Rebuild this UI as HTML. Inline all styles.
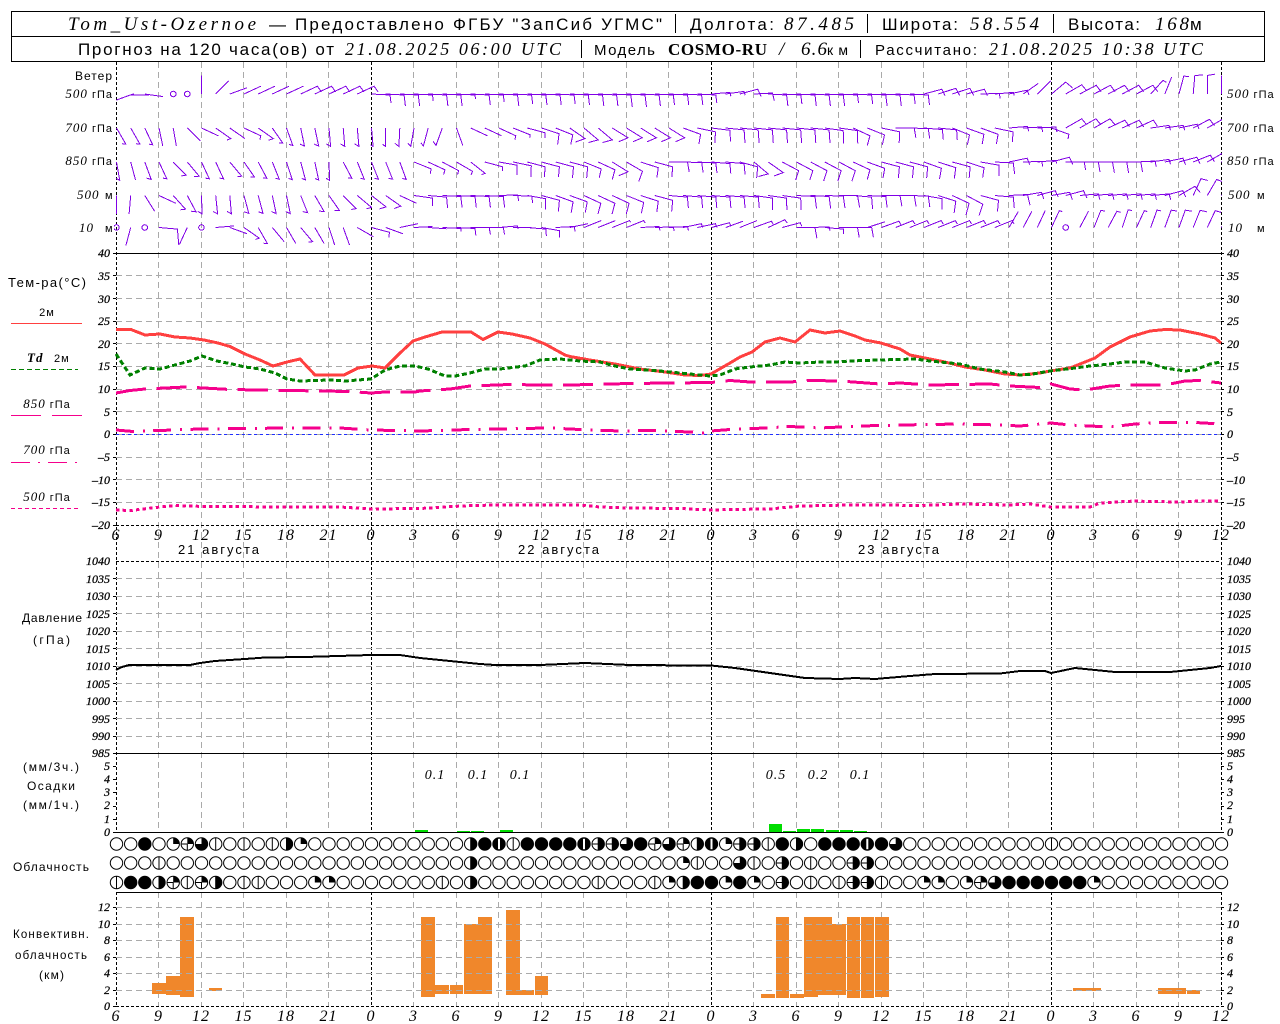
<!DOCTYPE html>
<html lang="ru">
<head>
<meta charset="utf-8">
<title>Tom_Ust-Ozernoe</title>
<style>
html,body{margin:0;padding:0;background:#fff;}
svg{position:absolute;left:0;top:0;display:block;}
text{fill:#000;}
.s{font-family:"Liberation Sans","DejaVu Sans",sans-serif;font-size:12px;letter-spacing:1px;}
.h{font-family:"Liberation Sans","DejaVu Sans",sans-serif;font-size:17px;}
.hi{font-family:"Liberation Serif","DejaVu Serif",serif;font-style:italic;font-size:19px;}
.hb{font-family:"Liberation Serif","DejaVu Serif",serif;font-weight:bold;font-size:17px;}
.n{font-family:"Liberation Serif","DejaVu Serif",serif;font-style:italic;font-size:12px;stroke:#000;stroke-width:.25px;}
.x{font-family:"Liberation Serif","DejaVu Serif",serif;font-style:italic;font-size:16px;text-anchor:middle;letter-spacing:1px;}
.v{font-family:"Liberation Serif","DejaVu Serif",serif;font-style:italic;font-size:14px;text-anchor:middle;letter-spacing:1px;}
.c{text-anchor:middle;}
.e{text-anchor:end;}
.it{font-family:"Liberation Serif","DejaVu Serif",serif;font-style:italic;font-size:13px;}
</style>
</head>
<body>
<svg xmlns="http://www.w3.org/2000/svg" width="1280" height="1024" viewBox="0 0 1280 1024">
<rect width="1280" height="1024" fill="#fff"/>
<g id="gfx"></g>

<!-- header -->
<rect x="11.5" y="11.5" width="1253" height="50" fill="none" stroke="#000"/>
<line x1="11" y1="36.5" x2="1265" y2="36.5" stroke="#000"/>
<g stroke="#000" shape-rendering="crispEdges">
<line x1="675.5" y1="14" x2="675.5" y2="33"/><line x1="867.5" y1="14" x2="867.5" y2="33"/><line x1="1053.5" y1="14" x2="1053.5" y2="33"/>
<line x1="860.5" y1="40" x2="860.5" y2="58"/><line x1="581.5" y1="40" x2="581.5" y2="58"/>
</g>
<text class="hi" x="68" y="30" textLength="188">Tom_Ust-Ozernoe</text>
<text class="h" x="269" y="30" textLength="12">—</text>
<text class="h" x="295" y="30" textLength="367">Предоставлено ФГБУ "ЗапСиб УГМС"</text>
<text class="h" x="690" y="30" textLength="84">Долгота:</text>
<text class="hi" x="784" y="30" textLength="70">87.485</text>
<text class="h" x="882" y="30" textLength="76">Широта:</text>
<text class="hi" x="970" y="30" textLength="69">58.554</text>
<text class="h" x="1068" y="30" textLength="72">Высота:</text>
<text class="hi" x="1155" y="30" textLength="34">168</text>
<text class="h" x="1190" y="30" textLength="12">м</text>

<text class="h" x="78" y="55" textLength="256">Прогноз на 120 часа(ов) от</text>
<text class="hi" x="345" y="55" textLength="216" style="font-size:18px">21.08.2025 06:00 UTC</text>
<text class="h" x="594" y="55" textLength="61" style="font-size:15px">Модель</text>
<text class="hb" x="668" y="55" textLength="99">COSMO-RU</text>
<text class="hi" x="779" y="55" textLength="11">/</text>
<text class="hi" x="801" y="55" textLength="26">6.6</text>
<text class="h" x="827" y="55" textLength="21" style="font-size:14px">км</text>
<text class="h" x="875" y="55" textLength="102" style="font-size:15px">Рассчитано:</text>
<text class="hi" x="989" y="55" textLength="214" style="font-size:18px">21.08.2025 10:38 UTC</text>

<!-- wind labels -->
<text class="s e" x="113" y="80">Ветер</text>
<g class="s" style="font-size:11px">
<text class="e" x="113" y="98"><tspan class="it">500</tspan> гПа</text>
<text class="e" x="113" y="132"><tspan class="it">700</tspan> гПа</text>
<text class="e" x="113" y="165"><tspan class="it">850</tspan> гПа</text>
<text x="77" y="199"><tspan class="it">500</tspan></text><text x="105" y="199">м</text>
<text x="79" y="232"><tspan class="it">10</tspan></text><text x="105" y="232">м</text>
<text x="1227" y="98"><tspan class="it">500</tspan> гПа</text>
<text x="1227" y="132"><tspan class="it">700</tspan> гПа</text>
<text x="1227" y="165"><tspan class="it">850</tspan> гПа</text>
<text x="1228" y="199"><tspan class="it">500</tspan></text><text x="1257" y="199">м</text>
<text x="1228" y="232"><tspan class="it">10</tspan></text><text x="1257" y="232">м</text>
</g>

<!-- temp legend -->
<text class="s" x="8" y="287" textLength="79" style="font-size:13px">Тем-ра(°С)</text>
<text class="s c" x="47" y="316" style="font-size:11px">2м</text>
<text class="s" x="27" y="362" style="font-size:11px"><tspan class="it" font-weight="bold">Td</tspan></text>
<text class="s" x="54" y="362" style="font-size:11px">2м</text>
<text class="s c" x="47" y="408" style="font-size:11px"><tspan class="it">850</tspan> гПа</text>
<text class="s c" x="47" y="454" style="font-size:11px"><tspan class="it">700</tspan> гПа</text>
<text class="s c" x="47" y="501" style="font-size:11px"><tspan class="it">500</tspan> гПа</text>

<!-- side labels -->
<text class="s" x="22" y="622" textLength="61">Давление</text>
<text class="s" x="33" y="644" textLength="38">(гПа)</text>
<text class="s" x="23" y="771" textLength="57">(мм/3ч.)</text>
<text class="s" x="27" y="790" textLength="49">Осадки</text>
<text class="s" x="23" y="809" textLength="57">(мм/1ч.)</text>
<text class="s" x="13" y="871" textLength="77">Облачность</text>
<text class="s" x="13" y="938" textLength="77" style="font-size:11.5px">Конвективн.</text>
<text class="s" x="15" y="959" textLength="73" style="font-size:11.5px">облачность</text>
<text class="s" x="39" y="979" textLength="26">(км)</text>

<!-- temp axes -->
<g class="n e">
<text x="110" y="257">40</text><text x="110" y="280">35</text><text x="110" y="303">30</text><text x="110" y="325">25</text><text x="110" y="348">20</text><text x="110" y="370">15</text><text x="110" y="393">10</text><text x="110" y="416">5</text><text x="110" y="438">0</text><text x="110" y="461">–5</text><text x="110" y="484">–10</text><text x="110" y="506">–15</text><text x="110" y="529">–20</text>
<text x="110" y="565">1040</text><text x="110" y="583">1035</text><text x="110" y="600">1030</text><text x="110" y="618">1025</text><text x="110" y="635">1020</text><text x="110" y="653">1015</text><text x="110" y="670">1010</text><text x="110" y="688">1005</text><text x="110" y="705">1000</text><text x="110" y="723">995</text><text x="110" y="740">990</text><text x="110" y="757">985</text>
<text x="110" y="770">5</text><text x="110" y="783">4</text><text x="110" y="796">3</text><text x="110" y="809">2</text><text x="110" y="823">1</text><text x="110" y="836">0</text>
<text x="110" y="911">12</text><text x="110" y="928">10</text><text x="110" y="944">8</text><text x="110" y="961">6</text><text x="110" y="977">4</text><text x="110" y="994">2</text><text x="110" y="1010">0</text>
</g>
<g class="n">
<text x="1227" y="257">40</text><text x="1227" y="280">35</text><text x="1227" y="303">30</text><text x="1227" y="325">25</text><text x="1227" y="348">20</text><text x="1227" y="370">15</text><text x="1227" y="393">10</text><text x="1227" y="416">5</text><text x="1227" y="438">0</text><text x="1227" y="461">–5</text><text x="1227" y="484">–10</text><text x="1227" y="506">–15</text><text x="1227" y="529">–20</text>
<text x="1227" y="565">1040</text><text x="1227" y="583">1035</text><text x="1227" y="600">1030</text><text x="1227" y="618">1025</text><text x="1227" y="635">1020</text><text x="1227" y="653">1015</text><text x="1227" y="670">1010</text><text x="1227" y="688">1005</text><text x="1227" y="705">1000</text><text x="1227" y="723">995</text><text x="1227" y="740">990</text><text x="1227" y="757">985</text>
<text x="1227" y="770">5</text><text x="1227" y="783">4</text><text x="1227" y="796">3</text><text x="1227" y="809">2</text><text x="1227" y="823">1</text><text x="1227" y="836">0</text>
<text x="1227" y="911">12</text><text x="1227" y="928">10</text><text x="1227" y="944">8</text><text x="1227" y="961">6</text><text x="1227" y="977">4</text><text x="1227" y="994">2</text><text x="1227" y="1010">0</text>
</g>

<!-- x labels temperature -->
<g class="x">
<text x="116" y="540">6</text><text x="158.5" y="540">9</text><text x="201" y="540">12</text><text x="243.5" y="540">15</text><text x="286" y="540">18</text><text x="328.5" y="540">21</text><text x="371" y="540">0</text><text x="413.5" y="540">3</text><text x="456" y="540">6</text><text x="498.5" y="540">9</text><text x="541" y="540">12</text><text x="583.5" y="540">15</text><text x="626" y="540">18</text><text x="668.5" y="540">21</text><text x="711" y="540">0</text><text x="753.5" y="540">3</text><text x="796" y="540">6</text><text x="838.5" y="540">9</text><text x="881" y="540">12</text><text x="923.5" y="540">15</text><text x="966" y="540">18</text><text x="1008.5" y="540">21</text><text x="1051" y="540">0</text><text x="1093.5" y="540">3</text><text x="1136" y="540">6</text><text x="1178.5" y="540">9</text><text x="1221" y="540">12</text>
</g>
<text class="s" x="178" y="554" textLength="82" style="font-size:13px">21 августа</text>
<text class="s" x="518" y="554" textLength="82" style="font-size:13px">22 августа</text>
<text class="s" x="858" y="554" textLength="82" style="font-size:13px">23 августа</text>

<!-- precipitation values -->
<g class="v">
<text x="435" y="779">0.1</text><text x="478" y="779">0.1</text><text x="520" y="779">0.1</text>
<text x="776" y="779">0.5</text><text x="818" y="779">0.2</text><text x="860" y="779">0.1</text>
</g>

<!-- x labels bottom -->
<g class="x">
<text x="116" y="1021">6</text><text x="158.5" y="1021">9</text><text x="201" y="1021">12</text><text x="243.5" y="1021">15</text><text x="286" y="1021">18</text><text x="328.5" y="1021">21</text><text x="371" y="1021">0</text><text x="413.5" y="1021">3</text><text x="456" y="1021">6</text><text x="498.5" y="1021">9</text><text x="541" y="1021">12</text><text x="583.5" y="1021">15</text><text x="626" y="1021">18</text><text x="668.5" y="1021">21</text><text x="711" y="1021">0</text><text x="753.5" y="1021">3</text><text x="796" y="1021">6</text><text x="838.5" y="1021">9</text><text x="881" y="1021">12</text><text x="923.5" y="1021">15</text><text x="966" y="1021">18</text><text x="1008.5" y="1021">21</text><text x="1051" y="1021">0</text><text x="1093.5" y="1021">3</text><text x="1136" y="1021">6</text><text x="1178.5" y="1021">9</text><text x="1221" y="1021">12</text>
</g>
</svg>
<script>
(function(){
var o=[];
var GREY='#aaaaaa',PINK='#f5008c',PUR='#8000e6';
function L(x1,y1,x2,y2,c,d,w){o.push('<line x1="'+x1+'" y1="'+y1+'" x2="'+x2+'" y2="'+y2+'" stroke="'+c+'" stroke-width="'+(w||1)+'"'+(d?' stroke-dasharray="'+d+'"':'')+'/>');}
function R(x0,x1,y0,y1,c){o.push('<rect x="'+x0+'" y="'+y0+'" width="'+(x1-x0)+'" height="'+(y1-y0)+'" fill="'+c+'"/>');}
function P(pts,c,w,d){var s=pts.map(function(p){return p[0]+','+p[1]}).join(' ');o.push('<polyline fill="none" points="'+s+'" stroke="'+c+'" stroke-width="'+w+'"'+(d?' stroke-dasharray="'+d+'"':'')+'/>');}
o.push('<g shape-rendering="crispEdges">');

/* vertical grid */
for(var k=0;k<27;k++){
  var x=Math.floor(116+42.5*k)+0.5;
  var black=(k==0||k==26||k==6||k==14||k==22);
  var c=black?'#000':GREY, d=black?'3,2':'6,4';
  L(x,62,x,832,c,d);
  L(x,892,x,1006,c,d);
}

/* horizontal grid: temperature */
for(var v=35;v>=-15;v-=5){var y=Math.round(434-v*4.533)+0.5;L(116,y,1221,y,GREY,'6,4');L(113,y,116,y,'#000');L(1221,y,1224,y,'#000');}
L(116,525.5,1221,525.5,'#000','3,2');L(113,525.5,116,525.5,'#000');L(1221,525.5,1224,525.5,'#000');
L(116,434.5,1221,434.5,'#2030ff','3,3');

/* horizontal grid: pressure */
for(var p=1035;p>=990;p-=5){var yy=Math.round(561+(1040-p)*3.49)+0.5;L(116,yy,1221,yy,GREY,'6,4');L(113,yy,116,yy,'#000');L(1221,yy,1224,yy,'#000');}
L(116,561.5,1221,561.5,'#000','3,2');

/* precip ticks */
for(var q=1;q<=5;q++){var yq=Math.round(832-q*13.2)+0.5;L(113,yq,116,yq,'#000');L(1221,yq,1224,yq,'#000');}

/* panel lines */
L(113,253.5,1224,253.5,'#000');
L(113,753.5,1224,753.5,'#000');
L(113,832.5,1224,832.5,'#000');
L(116,892.5,1222,892.5,'#000');

/* precip bars */
[[415,428,830],[457,470,831],[471,484,831],[500,513,830],[769,782,824],[783,796,831],[797,810,829],[811,824,829],[826,839,830],[840,853,830],[854,867,831]].forEach(function(b){R(b[0],b[1],b[2],832,'#00dd00');});

/* conv bars */
[[152,166,983,994],[166,180,976,995],[180,194,917,997],[209,222,988,991],
[421,435,917,997],[435,449,985,994],[450,463,985,994],[464,478,924,994],[478,492,917,994],
[506,520,910,995],[520,534,990,995],[535,548,976,995],
[761,775,994,998],[776,789,917,998],[790,804,994,998],[804,818,917,997],[818,832,917,995],[832,846,924,995],[847,860,917,998],[861,874,917,998],[875,889,917,997],
[1073,1101,988,991],[1158,1186,988,994],[1187,1200,990,994]].forEach(function(b){R(b[0],b[1],b[2],b[3],'#f0872b');});

/* conv horiz grid */
for(var g=2;g<=12;g+=2){var yg=Math.round(1006.3-g*8.25)+0.5;L(116,yg,1221,yg,GREY,'6,4');L(113,yg,116,yg,'#000');L(1221,yg,1224,yg,'#000');}
L(116,1006.5,1221,1006.5,'#000','3,2');L(113,1006.5,116,1006.5,'#000');L(1221,1006.5,1224,1006.5,'#000');

/* legend lines */
L(11,323.5,82,323.5,'#ff4040');
L(11,369.5,78,369.5,'#008000','5,3');
L(11,415.5,41,415.5,PINK);L(52,415.5,82,415.5,PINK);
L(11,462.5,30,462.5,PINK);L(38,462.5,40,462.5,PINK);L(48,462.5,67,462.5,PINK);L(75,462.5,77,462.5,PINK);
L(11,508.5,78,508.5,PINK,'4,3');

/* curves */
var T2=[[116,329.5],[131,329.5],[145,335],[160,334],[175,337],[190,338],[204,340],[218,343],[230,346.5],[245,354],[260,360],[273,366],[287,362],[300,359],[315,375],[344,375],[358,368],[372,366],[385,368],[400,353],[413,341],[425,337],[442,332],[471,332],[483,339.5],[498,332],[512,334],[530,338],[545,344],[565,355],[570,356.5],[590,360],[615,364],[640,369],[665,372],[685,375],[700,375.5],[711,374],[730,363],[740,357],[752,352],[765,342],[780,338],[795,342],[810,330],[825,333],[840,331],[855,336],[865,340],[881,343],[900,349],[910,355],[925,358],[945,362],[965,367],[985,370],[1005,374],[1020,375],[1040,373],[1050,371],[1070,368],[1095,358],[1110,347],[1130,337],[1150,331],[1165,329.5],[1180,330],[1200,334],[1215,338],[1221,343]];
var TD=[[116,354],[130,375],[145,368],[160,369],[175,365],[190,361],[202,356],[217,361],[232,364],[245,367],[260,369],[275,373],[287,379],[300,381],[330,380],[345,381],[371,379],[385,370],[400,366],[415,366],[428,369],[445,376],[455,376],[470,373],[485,369],[500,369],[525,366],[540,360],[560,359],[580,361],[600,362],[615,366],[630,369],[660,371],[690,374],[710,376],[720,375],[735,369],[750,367],[770,365],[785,362],[800,363],[820,362],[835,362],[850,361],[880,360],[915,359],[930,361],[960,364],[980,369],[1005,372],[1020,375],[1030,374.5],[1050,371],[1075,368],[1090,366],[1110,364],[1125,362],[1145,362],[1165,368],[1185,371],[1195,370],[1210,364],[1221,362]];
var T850=[[116,393],[130,390.5],[145,389],[175,387.5],[185,387],[204,388],[230,389.5],[290,390.5],[350,391.5],[371,393],[385,392],[415,392],[420,391],[450,389],[470,386],[510,384.5],[540,385],[570,385],[630,383.5],[711,382.5],[730,380.5],[750,382],[790,382],[810,380.5],[840,381],[880,384],[900,383],[930,385],[990,384],[1010,386],[1040,387.5],[1051,384],[1070,389],[1085,390],[1110,386],[1130,385],[1165,385],[1185,381],[1200,380.5],[1221,383]];
var T700=[[116,430],[133,431.5],[160,430.5],[200,429],[290,428],[340,428],[371,430],[420,431],[470,429.5],[520,428.5],[550,428],[580,429.5],[620,431],[650,430.5],[690,432],[703,433],[711,431],[730,429.5],[765,428],[790,426.5],[820,428],[860,426],[900,425],[960,424],[1000,425],[1020,426],[1051,423],[1070,425],[1090,426],[1110,427],[1135,424],[1160,422.5],[1195,422.5],[1221,424]];
var T500=[[116,510],[131,510.5],[160,507],[175,505.5],[205,506.5],[300,507],[340,507],[371,509],[420,508.5],[470,505.5],[500,505],[580,505],[600,507],[630,508],[680,508.5],[711,510],[730,509.5],[770,509],[800,506],[850,505],[880,505],[920,505.5],[960,504],[1010,505],[1030,504],[1051,507],[1090,507],[1100,503],[1135,501],[1150,501.5],[1180,502],[1200,501],[1221,501]];
var PR=[[116,670],[122,667],[129,665],[190,665],[200,663],[215,661],[245,659],[265,657.5],[305,657],[371,655],[400,655],[420,658],[450,661],[480,664],[495,665],[540,665],[585,663],[630,665],[700,665.5],[711,665.5],[735,668],[770,673],[805,678],[840,679],[855,678],[875,679],[910,676],[935,674],[1000,673.5],[1020,671],[1045,671],[1051,673],[1075,668],[1095,670],[1115,672],[1170,672],[1190,670],[1210,668],[1221,666]];
P(T500,PINK,3,'3.4,3.27');
P(T700,PINK,3,'18,9,2,8.3');
P(T850,PINK,3,'30.2,10.5');
P(T2,'#ff4040',3);
P(TD,'#008000',3,'5,2.7');
P(PR,'#000',2);
o.push('</g>');

/* wind barbs */
var rows=[
[94,"-20@6 0@1 8 _ c c -90 -45 -20 -25 -25 -25 -25 -25:7 -25:7 -25:7 -25:7 -25:7 3:8 3:11 3:11 3:6 3:11 3:11 3:4 3:10 3:7 3:11 3:9 3:10 3:10 3:9 3:10 3:11 3:11 3:12 3:12 3:11 3:10 3:10 3:10 3:8 -5:4 -8:4 -15:8 -3:8 3:11 3:9 3:11 3:11 3:11 3:8 3:9 3:11 3:11 3:9 3:10 -15:7 -18:8 -18:8 -15:7 -2:5 -5:3 -12:5 -35 -45 -40:9 -30:8 -28:8 -28:8 -28:8 -28:8 -28:8 -48:4 -68 -75:5 -85:8 -90:8 -90"],
[128,"60:4 60:4 65:4 78 80 45 25 35:4 35 25:4 35:5 55:4 70:4 78:5 78:5 85:5 85:5 85:5 85:3 90:4 93:5 100:4 105:4 110:5 70 25 25 25:4 22:3 15:5 18:11 22:10 35:10 40:10 40:10 32:10 32:10 32:10 32:10 32:10 20:10 12:11 7:11 6:13 6:13 6:13 6:13 6:13 6:13 6:13 8:13 8:13 25:10 22:10 12:11 0:10 2:10 5:10 6:10 22:10 20:10 20:10 12:10 -5:5 -3:5 -3:5 20:5 -30:7 -30:8 -30:8 -25:8 -25:8 -25:7 -8:5 -8:5 -12:5 -28:8 -30:8 -30:8"],
[162,"80:4 75 70:5 65:4 45:5 50:5 65:4 65:4 50:4 55:4 62:4 68:4 72:4 75:4 78:4 88:4 62:4 68:4 68:4 68:4 70:4 22:5 25:5 28:4 30:4 38:4 15:4 10:10 12:11 15:10 15:10 15:11 15:11 22:9 25:10 32:10 30:11 18:10 15:10 0:10 2:10 3:10 5:10 5:11 15:11 40:10 35:10 28:10 28:10 28:11 28:11 28:11 25:10 20:10 15:11 15:11 15:11 20:11 18:11 15:11 18:10 10:11 3:11 -12:7 -2:5 -5:3 -15:8 0:8 0:10 0:11 0:11 0:10 -3:6 -8:5 -12:7 -15:7 -22:8 -30:8 -35"],
[195.5,"90 95 58 25 48:5 62:5 88:5 84:5 85:5 75:5 75:5 78:5 78:5 68:5 60:5 55:5 45:5 40:5 38:7 35:7 25 8:8 5:11 3:11 3:11 3:11 3:11 -2:6 2:7 10:11 15:11 20:11 20:11 25:11 25:11 25:11 22:11 18:11 15:11 5:11 5:11 5:11 5:11 5:11 5:11 8:12 8:12 8:12 3:12 3:12 2:12 0:12 5:12 3:11 0:11 0:11 2:11 10:11 18:12 25:12 28:12 15:11 5:11 -3:11 -10:7 -15:7 -10:8 -15:8 -5:6 -5:6 -5:6 -5:6 -5:6 -5:6 -15:7 -30:8 -65:7 -60:7 -55"],
[227.5,"c 105 c 5:16 _ 115 c -5 20 35:4 60:4 50 60 50:4 60 72 70 30 15:5 20 -12 -3 4 3:3 3:7 0:7 0:7 -5:3 0 5:7 10:7 -3:5 -12 -22 -22 -22:2 -22:3 -3:4 -2:4 -3:4 -12:4 -12:4 -15:4 -20 -22 -20:4 -25:4 -15:4 0:11 -2:4 5:5 0:10 0:10 -18 -20:4 -22:4 -22:4 -22:4 -22:4 -22:4 -22:4 -22:4 -22:4 -60 -62 -65 -65:3 c -62 -68:4 -62:4 -72:4 -65:3 -70:4 -70:6 -70:7 -68:7 -65:6 -65"]
];
o.push('<clipPath id="cw"><rect x="114" y="62" width="1108" height="190"/></clipPath><g clip-path="url(#cw)" shape-rendering="crispEdges" fill="none" stroke="'+PUR+'">');
var D=Math.PI/180,LEN=18.5;
rows.forEach(function(r){
  var y00=r[0];
  r[1].split(' ').forEach(function(tok,i){
    var x0=116.5+14.1667*i,y0=y00;
    if(tok=='_')return;
    if(tok=='c'){o.push('<circle cx="'+x0.toFixed(1)+'" cy="'+y0+'" r="2.8"/>');return;}
    var at=tok.split('@');if(at[1])y0+=+at[1];
    var a=at[0].split(':'),T=+a[0],F=+(a[1]||0);
    var x1=x0+LEN*Math.cos(T*D),y1=y0+LEN*Math.sin(T*D);
    var dp='M'+x0.toFixed(1)+' '+y0+'L'+x1.toFixed(1)+' '+y1.toFixed(1);
    if(F){var ft=(T<=30?T+80:T+125)*D;dp+='l'+(F*Math.cos(ft)).toFixed(1)+' '+(F*Math.sin(ft)).toFixed(1);}
    o.push('<path d="'+dp+'"/>');
  });
});
o.push('</g>');

/* cloud symbols */
function rep(s,n){return s.repeat(n);}
var r1="oofoqctlololhq"+rep('o',11)+"hfvlffffveetfctchvqeelfhofffvft"+rep('o',10)+"l"+rep('o',12);
var r2="oool"+rep('o',21)+"h"+rep('o',14)+"qlootlo"+"eoloo"+"ee"+rep('o',25);
var r3="lffhclchollooo"+"qq"+rep('o',7)+"loh"+rep('o',8)+"looo"+"lqhffqfqo"+"eololeel"+"ooqqoqct"+rep('f',6)+"q"+rep('o',9);
var RR=6.2;
function sym(cx,cy,k){
  var r=RR,s='';
  s+='<circle cx="'+cx+'" cy="'+cy+'" r="'+r+'" fill="'+((k=='f'||k=='v')?'#000':'#fff')+'" stroke="#000"/>';
  var a='A'+r+' '+r+' 0 ';
  var top=(cy-r),bot=(cy+r),lf=(cx-r),rt=(cx+r);
  if(k=='q'||k=='c')s+='<path fill="#000" d="M'+cx+' '+cy+'V'+top+a+'0 1 '+rt+' '+cy+'Z"/>';
  if(k=='c')s+='<path stroke="#000" d="M'+cx+' '+cy+'V'+bot+'M'+lf+' '+cy+'H'+cx+'"/>';
  if(k=='t')s+='<path fill="#000" d="M'+cx+' '+cy+'V'+top+a+'1 1 '+lf+' '+cy+'Z"/>';
  if(k=='h'||k=='e')s+='<path fill="#000" d="M'+cx+' '+top+a+'0 1 '+cx+' '+bot+'Z"/><path stroke="#000" d="M'+cx+' '+top+'V'+bot+'"/>';
  if(k=='e')s+='<path stroke="#000" d="M'+lf+' '+cy+'H'+cx+'"/>';
  if(k=='l')s+='<path stroke="#000" d="M'+cx+' '+top+'V'+bot+'"/>';
  if(k=='v')s+='<rect x="'+(cx-1)+'" y="'+(top+1)+'" width="2" height="'+(2*r-2)+'" fill="#fff"/>';
  return s;
}
[[844,r1],[863,r2],[882.5,r3]].forEach(function(row){
  for(var i=0;i<row[1].length&&i<79;i++){
    var cx=+(116.5+14.1667*i).toFixed(1);
    o.push(sym(cx,row[0],row[1].charAt(i)));
  }
});
document.getElementById('gfx').innerHTML=o.join('');
})();
</script>
</body>
</html>
